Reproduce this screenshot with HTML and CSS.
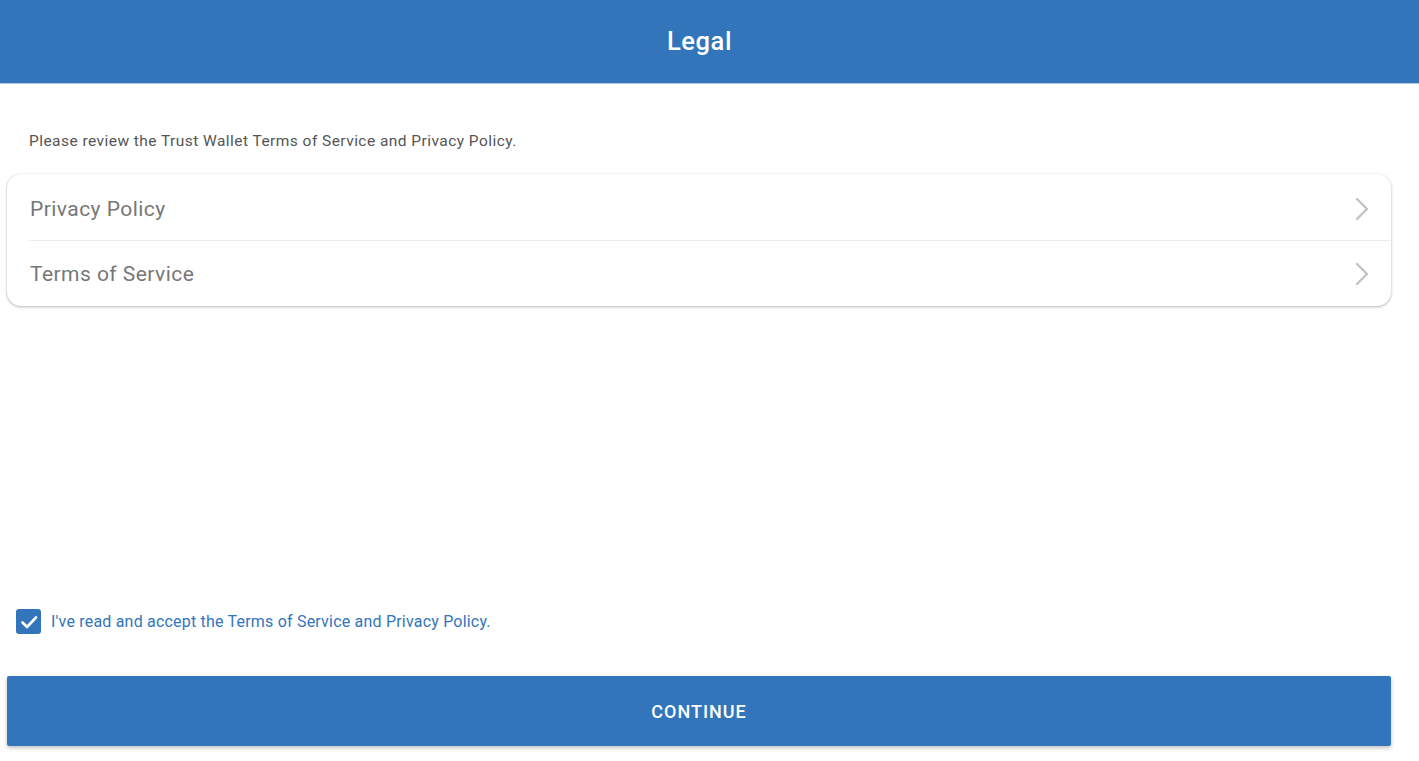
FILE: index.html
```html
<!DOCTYPE html>
<html lang="en">
<head>
<meta charset="utf-8">
<title>Legal</title>
<link rel="stylesheet" href="styles.css">
</head>
<body>
<div class="app">
  <header class="topbar"><h1 class="title">Legal</h1></header>
  <main class="content">
    <p class="intro">Please review the Trust Wallet Terms of Service and Privacy Policy.</p>
    <div class="card">
      <div class="row">
        <span class="row-label">Privacy Policy</span>
        <svg class="chev" width="14" height="24" viewBox="0 0 14 24"><path d="M2 2 L12 12 L2 22" fill="none" stroke="#c2c2c2" stroke-width="2.4" stroke-linecap="round" stroke-linejoin="round"/></svg>
      </div>
      <div class="divider"></div>
      <div class="row row-last">
        <span class="row-label">Terms of Service</span>
        <svg class="chev" width="14" height="24" viewBox="0 0 14 24"><path d="M2 2 L12 12 L2 22" fill="none" stroke="#c2c2c2" stroke-width="2.4" stroke-linecap="round" stroke-linejoin="round"/></svg>
      </div>
    </div>
    <div class="spacer"></div>
    <label class="accept">
      <span class="checkbox"><svg width="24" height="24" viewBox="0 0 24 24"><path d="M5.5 12.5 L10 17 L19 7.5" fill="none" stroke="#fff" stroke-width="2.6" stroke-linecap="round" stroke-linejoin="round"/></svg></span>
      <span class="accept-text">I've read and accept the Terms of Service and Privacy Policy.</span>
    </label>
    <button class="continue">CONTINUE</button>
  </main>
</div>
</body>
</html>
```
FILE: styles.css
```css
html, body {
  margin: 0;
  padding: 0;
  background: #ffffff;
}
body {
  font-family: Roboto, "Liberation Sans", Arial, sans-serif;
  width: 1419px;
  height: 761px;
  overflow: hidden;
}
.app {
  display: flex;
  flex-direction: column;
  height: 761px;
}
.topbar {
  height: 84px;
  box-sizing: border-box;
  padding-bottom: 2px;
  background: #3275bb;
  border-bottom: 1px solid #a9c6e6;
  display: flex;
  align-items: center;
  justify-content: center;
  padding-right: 20px;
}
.title {
  margin: 0;
  color: #ffffff;
  font-size: 25.5px;
  font-weight: 500;
  letter-spacing: 0.6px;
}
.content {
  flex: 1;
  display: flex;
  flex-direction: column;
  padding: 0 28px 15px 7px;
}
.intro {
  margin: 49px 0 0 22px;
  font-size: 15.5px;
  line-height: 16px;
  letter-spacing: 0.45px;
  color: #555555;
}
.card {
  margin-top: 25px;
  background: #fff;
  border-radius: 14px;
  box-shadow: 0 1px 3px rgba(0,0,0,0.28), 0 0 1px rgba(0,0,0,0.12);
  display: flex;
  flex-direction: column;
}
.row {
  height: 66px;
  box-sizing: border-box;
  display: flex;
  align-items: center;
  justify-content: space-between;
  padding: 3px 22px 0 23px;
}
.row-last {
  height: 65px;
  padding-top: 1px;
}
.row-label {
  font-size: 21px;
  letter-spacing: 0.45px;
  color: #777777;
}
.chev {
  display: block;
}
.divider {
  height: 1px;
  background: #ebebeb;
  margin-left: 22px;
}
.spacer {
  flex: 1;
}
.accept {
  display: flex;
  align-items: center;
  gap: 10px;
  margin-left: 9px;
  margin-bottom: 42px;
}
.checkbox {
  width: 25px;
  height: 25px;
  border-radius: 3px;
  background: #3275bb;
  display: flex;
  align-items: center;
  justify-content: center;
}
.checkbox svg {
  display: block;
}
.accept-text {
  font-size: 16px;
  letter-spacing: 0.2px;
  color: #3275bb;
}
.continue {
  height: 70px;
  border: none;
  border-radius: 2px;
  background: #3275bb;
  color: #ffffff;
  font-family: Roboto, "Liberation Sans", Arial, sans-serif;
  font-size: 18px;
  font-weight: 500;
  letter-spacing: 1px;
  box-shadow: 0 2px 4px rgba(0,0,0,0.25);
}
```
